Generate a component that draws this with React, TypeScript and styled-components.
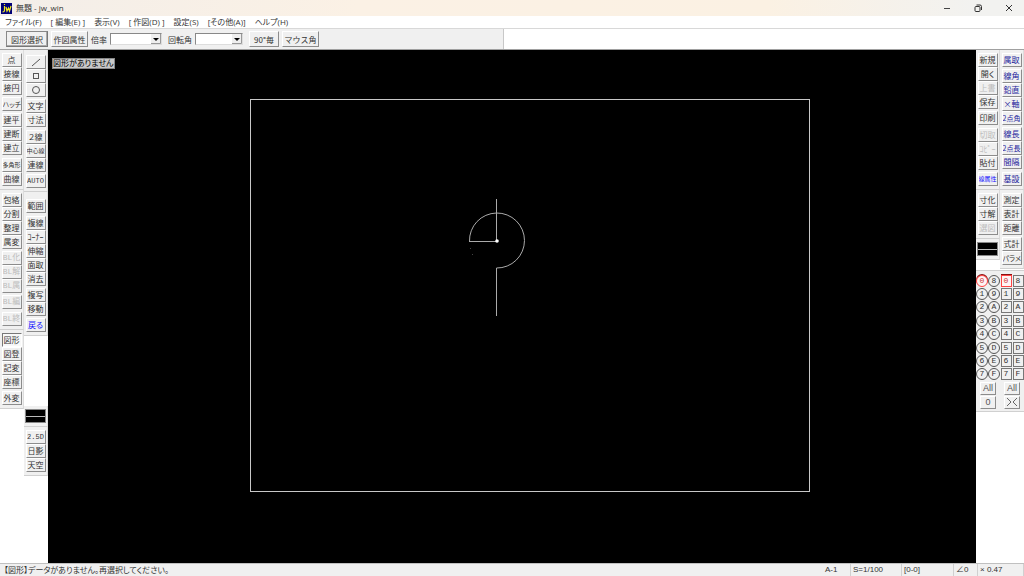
import React from "react";
import styled, { createGlobalStyle, css } from "styled-components";

const GlobalStyle = createGlobalStyle`
  * { box-sizing: border-box; }
  body { margin: 0; background: #fff; }
  body, button, select {
    font-family: "Liberation Sans", "Noto Sans CJK JP", sans-serif;
    font-size: 8px;
    color: #333;
  }
  button { margin: 0; padding: 0; border: 0; background: none; white-space: nowrap; }
`;

const Window = styled.div`
  display: flex;
  flex-direction: column;
  min-height: 100vh;
`;

const TitleBar = styled.header`
  display: flex;
  align-items: center;
  height: 16px;
  padding-left: 1px;
  background: linear-gradient(90deg, #f3eee9, #fbf1e5 35%, #fbf1e3 75%, #f2f2f0 95%);
`;

const Title = styled.h1`
  flex: 1;
  margin: 0 0 0 4px;
  font: 8px/16px "Open Sans", "Noto Sans CJK JP", sans-serif;
`;

const CaptionButton = styled.button`
  display: grid;
  place-items: center;
  width: 31px;
  height: 16px;
`;

const MenuBar = styled.nav`
  display: flex;
  gap: 9px;
  height: 12px;
  padding-left: 5px;
  background: #fff;
`;

const MenuItem = styled.button`
  height: 12px;
  line-height: 12px;
  font-family: "Open Sans", "Noto Sans CJK JP", sans-serif;
  font-feature-settings: "palt";
`;

const ToolBar = styled.div`
  display: flex;
  height: 22px;
  border-top: 1px solid #d8d8d8;
  border-bottom: 1px solid #a0a0a0;
`;

const ToolGroup = styled.div`
  display: flex;
  align-items: center;
  gap: 3px;
  width: 504px;
  padding-left: 6px;
  background: #f0f0f0;
  border-right: 1px solid #c8c8c8;
`;

const raised = css`
  background: #f0f0f0;
  border: 1px solid;
  border-color: #fff #8c8c8c #8c8c8c #fff;
`;

const ToolButton = styled.button<{ $width: number; $default?: boolean }>`
  width: ${(p) => p.$width}px;
  height: 16px;
  line-height: 13px;
  font-family: "Noto Sans CJK JP", sans-serif;
  ${raised}
  ${(p) => p.$default && "border-color: #888 #777 #777 #888; box-shadow: inset -1px -1px #aaa;"}
`;

const Field = styled.label`
  display: flex;
  align-items: center;
  gap: 3px;
  margin-right: 3px;
  white-space: nowrap;
`;

const Combo = styled.span<{ $width: number }>`
  position: relative;
  width: ${(p) => p.$width}px;
  height: 12px;

  select {
    display: block;
    width: 100%;
    height: 12px;
    appearance: none;
    background: #fff;
    border: 1px solid;
    border-color: #888 #ddd #ddd #888;
    border-radius: 0;
  }
  svg {
    position: absolute;
    top: 1px;
    right: 1px;
    pointer-events: none;
  }
`;

const Workspace = styled.main`
  display: flex;
  flex: 1;
`;

const Dock = styled.aside`
  display: flex;
  flex: none;
`;

const DockColumn = styled.div`
  width: 24px;
  background: #fff;
`;

const Panel = styled.div<{ $top?: number; $before?: number }>`
  margin-top: ${(p) => p.$before ?? 0}px;
  padding: ${(p) => p.$top ?? 3}px 2px 3px;
  background: #f0f0f0;
  border-bottom: 1px solid #d0d0d0;
  border-right: 1px solid #dcdcdc;
`;

const ButtonGroup = styled.div<{ $gap: number }>`
  display: flex;
  flex-direction: column;
  align-items: center;
  margin-top: ${(p) => p.$gap}px;
`;

type Tone = "normal" | "navy" | "blue";
const toneColor: Record<Tone, string> = { normal: "#333", navy: "#1c1c9c", blue: "#1010ff" };

const DockButton = styled.button<{ $tone: Tone; $size?: number; $mono?: boolean; $pressed?: boolean }>`
  display: grid;
  place-items: center;
  width: 20px;
  height: 14px;
  line-height: 12px;
  overflow: hidden;
  font-family: ${(p) => (p.$mono ? '"Liberation Mono", ' : "")}"Noto Sans CJK JP", sans-serif;
  font-size: ${(p) => p.$size ?? 8}px;
  font-feature-settings: "palt";
  color: ${(p) => toneColor[p.$tone]};
  ${raised}
  ${(p) => p.$pressed && "border-color: #777 #fff #fff #777; background: #f8f8f8;"}
  &:disabled { color: #bcbcbc; }
`;

const LineSample = styled.button`
  display: flex;
  align-items: center;
  width: 21px;
  height: 14px;
  margin-left: -1px;
  background: #000;
  border: 1px solid #888;

  &::before {
    content: "";
    width: 100%;
    height: 1px;
    background: #bbb;
  }
`;

const LayerPanel = styled.div<{ $before: number }>`
  margin-top: ${(p) => p.$before}px;
  padding: 3px 0 1px;
  background: #f0f0f0;
  border-top: 1px solid #d0d0d0;
  border-bottom: 1px solid #d0d0d0;
`;

const LayerGrid = styled.div`
  display: grid;
  grid-template: repeat(8, 1fr) / 1fr 1fr;
  align-items: center;
  justify-items: center;
  height: 107px;
`;

const LayerButton = styled.button<{ $round: boolean; $current: boolean }>`
  display: grid;
  place-items: center;
  width: ${(p) => (p.$round ? 12 : 11)}px;
  height: 12px;
  font: 8px/10px "Liberation Mono", monospace;
  border: 1px solid ${(p) => (p.$round ? "#555" : "#777")};
  border-radius: ${(p) => (p.$round ? "50%" : "0")};
  ${(p) =>
    p.$current &&
    css`
      color: #c33;
      border-color: #f44;
      background: #fff4f4;
      box-shadow: 0 -1px #811;
    `}
`;

const LayerAction = styled.button`
  display: block;
  width: 16px;
  height: 13px;
  margin: 1px auto;
  font-size: 9px;
  line-height: 11px;
  color: #555;
  ${raised}
`;

const Canvas = styled.section`
  position: relative;
  flex: 1;
  min-width: 0;
  background: #000;

  > svg {
    position: absolute;
    width: 100%;
    height: 100%;
  }
`;

const CanvasNotice = styled.output`
  position: absolute;
  top: 8px;
  left: 4px;
  height: 11px;
  line-height: 8px;
  font-family: "Noto Sans CJK JP", sans-serif;
  font-feature-settings: "palt";
  color: #000;
  background: #c8c8c8;
  border: 1px solid #888;
`;

const StatusBar = styled.footer`
  display: flex;
  height: 13px;
  line-height: 12px;
  background: #f0f0f0;
  border-top: 1px solid #c0c0c0;
`;

const StatusMessage = styled.span`
  flex: 1;
  padding-left: 4px;
  font-family: "Noto Sans CJK JP", sans-serif;
  font-feature-settings: "palt";
`;

const StatusCell = styled.button<{ $width: number }>`
  width: ${(p) => p.$width}px;
  padding-left: 2px;
  text-align: left;
  line-height: 12px;
  border-right: 1px solid #d0d0d0;
`;

interface Command {
  label: React.ReactNode;
  name?: string;
  tone?: Tone;
  disabled?: boolean;
  size?: number;
  mono?: boolean;
  pressed?: boolean;
}
interface Group {
  gap: number;
  items: (string | Command)[];
}

const off = (label: string, mono = false): Command => ({ label, disabled: true, mono });
const small = (label: string, size: number, tone?: Tone): Command => ({ label, size, tone });

const shape = (name: string, drawing: React.ReactNode): Command => ({
  name,
  label: (
    <svg width="12" height="12" fill="none" stroke="#555">
      {drawing}
    </svg>
  ),
});

const drawTools: Group[] = [
  { gap: 0, items: ["点", "接線", "接円"] },
  { gap: 2, items: [small("ハッチ", 7)] },
  { gap: 2, items: ["建平", "建断", "建立"] },
  { gap: 3, items: [small("多角形", 6), "曲線"] },
];
const editTools: Group[] = [
  { gap: 0, items: ["包絡", "分割", "整理", "属変"] },
  { gap: 2, items: [off("BL化", true), off("BL解", true), off("BL属", true)] },
  { gap: 2, items: [off("BL編", true)] },
  { gap: 3, items: [off("BL終", true)] },
];
const figureTools: Group[] = [
  { gap: 0, items: [{ label: "図形", pressed: true }, "図登", "記変", "座標"] },
  { gap: 2, items: ["外変"] },
];
const basicTools: Group[] = [
  {
    gap: 0,
    items: [
      shape("線", <path d="M2 10 10 3" />),
      shape("矩形", <rect x="3.5" y="3.5" width="5" height="5" />),
      shape("円", <circle cx="6" cy="6" r="3.5" />),
    ],
  },
  { gap: 2, items: ["文字", "寸法"] },
  { gap: 3, items: ["２線", small("中心線", 6), "連線"] },
  { gap: 2, items: [{ label: "AUTO", mono: true, size: 7 }] },
];
const modifyTools: Group[] = [
  { gap: 0, items: ["範囲"] },
  { gap: 3, items: ["複線", "ｺｰﾅｰ", "伸縮", "面取", "消去"] },
  { gap: 2, items: ["複写", "移動"] },
  { gap: 2, items: [{ label: "戻る", tone: "blue" }] },
];
const viewTools: Group[] = [{ gap: 0, items: [{ label: "2.5D", mono: true, size: 7 }, "日影", "天空"] }];
const fileTools: Group[] = [
  { gap: 0, items: ["新規", "開く", off("上書"), "保存"] },
  { gap: 2, items: ["印刷"] },
  { gap: 3, items: [off("切取"), off("ｺﾋﾟｰ"), "貼付"] },
  { gap: 2, items: [small("線属性", 6, "blue")] },
];
const dimensionTools: Group[] = [{ gap: 0, items: ["寸化", "寸解", off("選図")] }];
const attributeTools: Group[] = [
  { gap: 0, items: ["属取"] },
  { gap: 2, items: ["線角", "鉛直", "×軸", small("2点角", 7)] },
  { gap: 2, items: ["線長", small("2点長", 7), "間隔"] },
  { gap: 3, items: ["基設"] },
];
const measureTools: Group[] = [
  { gap: 0, items: ["測定", "表計", "距離"] },
  { gap: 2, items: ["式計", small("パラメ", 7)] },
];

function CommandPanel({ groups, tone = "normal", top, before }: { groups: Group[]; tone?: Tone; top?: number; before?: number }) {
  return (
    <Panel $top={top} $before={before}>
      {groups.map((group, g) => (
        <ButtonGroup key={g} $gap={group.gap}>
          {group.items.map((item, i) => {
            const c: Command = typeof item === "string" ? { label: item } : item;
            return (
              <DockButton
                key={i}
                type="button"
                aria-label={c.name}
                disabled={c.disabled}
                $tone={c.tone ?? tone}
                $size={c.size}
                $mono={c.mono}
                $pressed={c.pressed}
              >
                {c.label}
              </DockButton>
            );
          })}
        </ButtonGroup>
      ))}
    </Panel>
  );
}

const layers = ["0", "8", "1", "9", "2", "A", "3", "B", "4", "C", "5", "D", "6", "E", "7", "F"];

function Layers({ round = false, before, action }: { round?: boolean; before: number; action: React.ReactNode }) {
  return (
    <LayerPanel $before={before}>
      <LayerGrid>
        {layers.map((id) => (
          <LayerButton key={id} type="button" $round={round} $current={id === "0"}>
            {id}
          </LayerButton>
        ))}
      </LayerGrid>
      <LayerAction type="button">All</LayerAction>
      {action}
    </LayerPanel>
  );
}

function ComboBox({ label, width }: { label: string; width: number }) {
  return (
    <Field>
      {label}
      <Combo $width={width}>
        <select defaultValue="">
          <option value="" />
        </select>
        <svg width="10" height="10">
          <rect width="10" height="10" fill="#eee" />
          <path d="M0 9.5h9.5V0" fill="none" stroke="#999" />
          <path d="M2 4h6L5 7z" fill="#000" />
        </svg>
      </Combo>
    </Field>
  );
}

const menus = ["ファイル(F)", "[ 編集(E) ]", "表示(V)", "[ 作図(D) ]", "設定(S)", "[その他(A)]", "ヘルプ(H)"];

export default function App() {
  return (
    <Window>
      <GlobalStyle />
      <TitleBar>
        <svg width="11" height="11" viewBox="0 0 11 11">
          <rect width="11" height="11" fill="#000078" />
          <path d="M3.5 3v4.500q0 1.500-2 1.500M3.500 1v1M5 4l1 4 1.500-3 1 3L10 3" fill="none" stroke="#f4ec20" strokeWidth="1.200" />
        </svg>
        <Title>無題 - jw_win</Title>
        <CaptionButton type="button" aria-label="最小化">
          <svg width="10" height="10" stroke="#444"><path d="M2 5.500h6" /></svg>
        </CaptionButton>
        <CaptionButton type="button" aria-label="元に戻す">
          <svg width="10" height="10" fill="none" stroke="#333">
            <rect x="2" y="3.500" width="5" height="5" rx="1" />
            <path d="M3.500 2h3.500q1.500 0 1.500 1.500V7" />
          </svg>
        </CaptionButton>
        <CaptionButton type="button" aria-label="閉じる">
          <svg width="10" height="10" stroke="#333"><path d="m2 2 6 6M8 2 2 8" /></svg>
        </CaptionButton>
      </TitleBar>
      <MenuBar>
        {menus.map((m) => (
          <MenuItem key={m} type="button">{m}</MenuItem>
        ))}
      </MenuBar>
      <ToolBar>
        <ToolGroup>
          <ToolButton type="button" $width={42} $default>図形選択</ToolButton>
          <ToolButton type="button" $width={37}>作図属性</ToolButton>
          <ComboBox label="倍率" width={52} />
          <ComboBox label="回転角" width={48} />
          <ToolButton type="button" $width={30}>90°毎</ToolButton>
          <ToolButton type="button" $width={37}>マウス角</ToolButton>
        </ToolGroup>
      </ToolBar>
      <Workspace>
        <Dock>
          <DockColumn>
            <CommandPanel groups={drawTools} />
            <CommandPanel groups={editTools} />
            <CommandPanel groups={figureTools} />
          </DockColumn>
          <DockColumn>
            <CommandPanel groups={basicTools} top={5} />
            <CommandPanel groups={modifyTools} top={7} />
            <Panel $before={70}>
              <LineSample type="button" aria-label="線属性" />
            </Panel>
            <CommandPanel groups={viewTools} />
          </DockColumn>
        </Dock>
        <Canvas>
          <svg viewBox="0 0 928 513" fill="none" stroke="#c8c8c8">
            <rect x="202.500" y="49.500" width="559" height="392" />
            <path d="M448.500 149v42M421 191.500h28M421.500 191.500a27.500 27.500 0 1 1 27 26.500V266" stroke="#aaa" />
            <circle cx="449" cy="191" r="1.800" fill="#fff" stroke="none" />
            <path d="M422 198.500h1M424 204.500h1" stroke="#444" />
          </svg>
          <CanvasNotice>図形がありません</CanvasNotice>
        </Canvas>
        <Dock>
          <DockColumn>
            <CommandPanel groups={fileTools} />
            <CommandPanel groups={dimensionTools} />
            <Panel>
              <LineSample type="button" aria-label="線属性" />
            </Panel>
            <Layers round before={10} action={<LayerAction type="button">0</LayerAction>} />
          </DockColumn>
          <DockColumn>
            <CommandPanel groups={attributeTools} tone="navy" />
            <CommandPanel groups={measureTools} />
            <Layers
              before={1}
              action={
                <LayerAction type="button" aria-label="切替">
                  <svg width="12" height="9" fill="none" stroke="#666"><path d="m1 1 4 4-4 4M11 1 7 5l4 4" /></svg>
                </LayerAction>
              }
            />
          </DockColumn>
        </Dock>
      </Workspace>
      <StatusBar>
        <StatusMessage>【図形】データがありません。再選択してください。</StatusMessage>
        <StatusCell type="button" $width={28}>A-1</StatusCell>
        <StatusCell type="button" $width={51}>S=1/100</StatusCell>
        <StatusCell type="button" $width={52}>[0-0]</StatusCell>
        <StatusCell type="button" $width={24}>∠0</StatusCell>
        <StatusCell type="button" $width={46}>× 0.47</StatusCell>
      </StatusBar>
    </Window>
  );
}
